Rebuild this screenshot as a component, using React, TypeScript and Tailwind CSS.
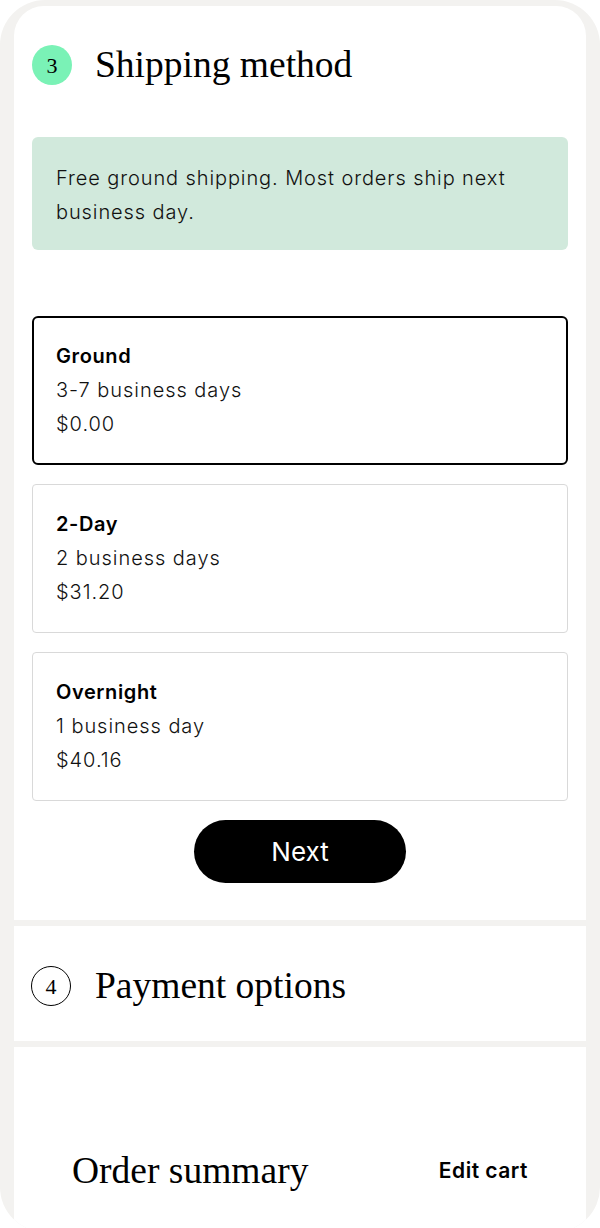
import React from "react";

const serif = { fontFamily: '"Liberation Serif", "Times New Roman", serif' };
const sans = { fontFamily: 'Inter, "Liberation Sans", Arial, sans-serif' };

type Option = { name: string; days: string; price: string; selected?: boolean };

const options: Option[] = [
  { name: "Ground", days: "3-7 business days", price: "$0.00", selected: true },
  { name: "2-Day", days: "2 business days", price: "$31.20" },
  { name: "Overnight", days: "1 business day", price: "$40.16" },
];

function ShipOption({ opt }: { opt: Option }) {
  return (
    <div
      className={
        opt.selected
          ? "h-[149px] rounded-[6px] border-2 border-black px-[22px] py-[21px]"
          : "h-[149px] rounded-[4px] border border-[#d9d9d9] px-[23px] py-[22px]"
      }
    >
      <div className="text-[20px] leading-[34px] font-semibold tracking-[0.6px] text-black">{opt.name}</div>
      <div className="text-[20px] leading-[34px] font-light tracking-[0.95px] text-[#111]">{opt.days}</div>
      <div className="text-[20px] leading-[34px] font-light tracking-[0.95px] text-[#111]">{opt.price}</div>
    </div>
  );
}

export default function App() {
  return (
    <div className="w-[600px] h-[1228px] bg-white overflow-hidden" style={sans}>
      <div className="h-[1232px] rounded-[45px] overflow-hidden bg-[#f3f2f0] pt-[6px] px-[14px] flex flex-col gap-[6px]">
        {/* shipping method */}
        <div className="bg-white rounded-t-[30px] px-[18px] pt-[39px] pb-[37px]">
          <div className="flex items-center gap-[23px]">
            <div
              className="w-[40px] h-[40px] rounded-full bg-[#7af2b6] flex items-center justify-center text-[22px] text-black"
              style={serif}
            >
              3
            </div>
            <h2 className="text-[37.5px] leading-[40px] text-black" style={serif}>
              Shipping method
            </h2>
          </div>

          <div className="mt-[52px] bg-[#d1e9dc] rounded-[6px] px-[24px] pt-[24px] pb-[21px] text-[20px] leading-[34px] font-light tracking-[0.9px] text-[#111]">
            Free ground shipping. Most orders ship next business day.
          </div>

          <div className="mt-[66px] flex flex-col gap-[19px]">
            {options.map((o) => (
              <ShipOption key={o.name} opt={o} />
            ))}
          </div>

          <div className="mt-[19px] flex justify-center">
            <button className="w-[212px] h-[63px] rounded-full bg-black text-white text-[26px] font-normal">
              Next
            </button>
          </div>
        </div>

        {/* payment */}
        <div className="bg-white h-[115px] px-[17px] pt-[40px]">
          <div className="flex items-center gap-[24px]">
            <div
              className="w-[40px] h-[40px] rounded-full border-[1.5px] border-black flex items-center justify-center text-[22px] text-black"
              style={serif}
            >
              4
            </div>
            <h2 className="text-[37.5px] leading-[40px] text-black" style={serif}>
              Payment options
            </h2>
          </div>
        </div>

        {/* summary */}
        <div className="bg-white flex-1 px-[58px] pt-[102px]">
          <div className="flex items-center justify-between h-[44px]">
            <h2 className="text-[37.5px] leading-[44px] text-black" style={serif}>
              Order summary
            </h2>
            <span className="text-[21px] font-semibold tracking-[0.5px] text-black">Edit cart</span>
          </div>
        </div>
      </div>
    </div>
  );
}
